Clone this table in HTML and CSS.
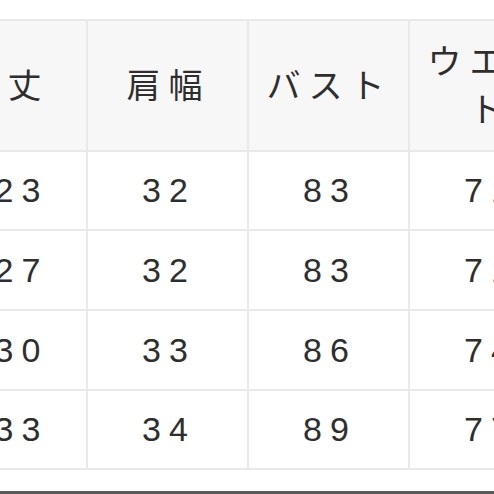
FILE: index.html
```html
<!DOCTYPE html>
<html lang="ja">
<head>
<meta charset="utf-8">
<link rel="stylesheet" href="styles.css">
</head>
<body>
<div class="page">
  <div class="size-table">
    <div class="cell head">着丈</div>
    <div class="cell head">肩幅</div>
    <div class="cell head">バスト</div>
    <div class="cell head">ウエスト</div>
    <div class="cell head">ヒップ</div>

    <div class="cell">123</div>
    <div class="cell">32</div>
    <div class="cell">83</div>
    <div class="cell">71</div>
    <div class="cell">88</div>

    <div class="cell">127</div>
    <div class="cell">32</div>
    <div class="cell">83</div>
    <div class="cell">71</div>
    <div class="cell">88</div>

    <div class="cell">130</div>
    <div class="cell">33</div>
    <div class="cell">86</div>
    <div class="cell">74</div>
    <div class="cell">91</div>

    <div class="cell">133</div>
    <div class="cell">34</div>
    <div class="cell">89</div>
    <div class="cell">77</div>
    <div class="cell">94</div>
  </div>
  <div class="bottom-bar"></div>
</div>
</body>
</html>
```

FILE: styles.css
```css
html, body {
  margin: 0;
  padding: 0;
  overflow: hidden;
  background: #ffffff;
}

.page {
  width: 494px;
  height: 494px;
  overflow: hidden;
  padding-top: 19px;
  box-sizing: border-box;
}

.size-table {
  display: grid;
  grid-template-columns: repeat(5, 161px);
  grid-template-rows: 131px 79px 80px 80px 79px;
  width: 807px;
  margin-left: -75px;
  border-left: 2px solid #e9e9e9;
  border-top: 2px solid #e9e9e9;
  box-sizing: border-box;
  font-family: "Liberation Sans", "Noto Sans CJK JP", sans-serif;
  font-size: 34px;
  letter-spacing: 8px;
  color: #2e2e2e;
}

.cell {
  display: flex;
  align-items: center;
  justify-content: center;
  text-align: center;
  box-sizing: border-box;
  border-right: 2px solid #e9e9e9;
  border-bottom: 2px solid #e9e9e9;
  padding: 0 0 0 3px;
  background: #ffffff;
}

.head {
  background: #f7f7f7;
  line-height: 48px;
  padding: 0 4px 0 6px;
}

.bottom-bar {
  margin-top: 21px;
  height: 3px;
  background: #5a5a5a;
}
```
